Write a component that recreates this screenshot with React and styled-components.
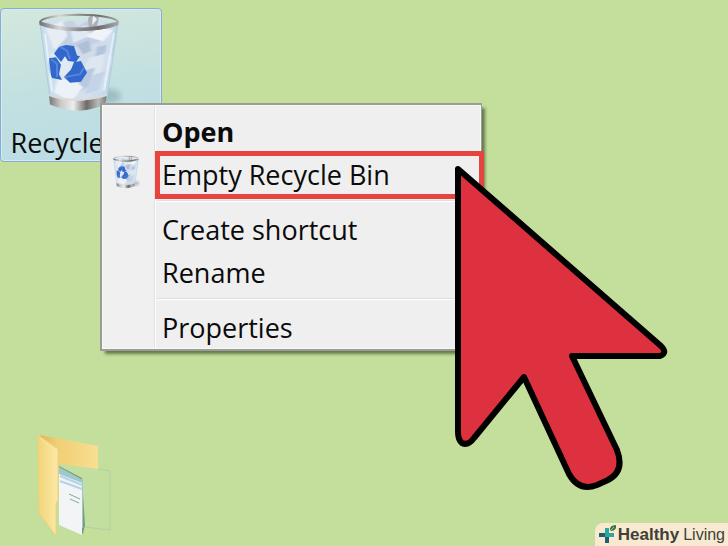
import React from "react";
import styled, { createGlobalStyle, css } from "styled-components";

const GlobalStyle = createGlobalStyle`
  * {
    box-sizing: border-box;
  }
  body {
    margin: 0;
    font-family: "Open Sans", "Noto Sans", sans-serif;
    color: #0b0b0b;
  }
`;

const Desktop = styled.main`
  position: relative;
  min-height: 100vh;
  overflow: hidden;
  background: #c4df9b;
`;

const BinShortcut = styled.button`
  position: absolute;
  top: 8px;
  left: 0;
  display: flex;
  flex-direction: column;
  align-items: center;
  gap: 12px;
  width: 162px;
  padding: 2px 0 0;
  border: 1px solid #86aed0;
  border-radius: 4px;
  background: linear-gradient(170deg, #d3e8de 0%, #c3e0e0 50%, #b9dce8 100%);
  box-shadow: inset 0 0 0 1px #d5ebf0;
  color: inherit;
  font: inherit;
  svg {
    display: block;
    margin-right: 4px;
  }
`;

const ShortcutLabel = styled.span`
  height: 36px;
  font-size: 27px;
  line-height: 36px;
  white-space: nowrap;
`;

const FolderShortcut = styled.button`
  position: absolute;
  top: 430px;
  left: 32px;
  padding: 0;
  border: 0;
  background: none;
  svg {
    display: block;
  }
`;

const Menu = styled.ul`
  position: absolute;
  top: 103px;
  left: 100px;
  width: 382px;
  margin: 0;
  padding: 5px 0 0;
  list-style: none;
  border: 2px solid #9a9c98;
  border-right-width: 1px;
  background: linear-gradient(to right, #f0f0f0 52px, #e0e0e0 52px, #e0e0e0 53px, #fdfdfd 53px, #fdfdfd 54px, #efefef 54px);
  box-shadow: inset 0 0 0 1px #f8f8f8, 4px 4px 3px -1px rgba(50, 65, 30, 0.65);
`;

const MenuItem = styled.li`
  position: relative;
  ${(props) =>
    props.$marked &&
    css`
      &::after {
        content: "";
        position: absolute;
        inset: -2px -3px -3px 53px;
        border: 5px solid #e5443f;
        pointer-events: none;
      }
    `}
`;

const MenuButton = styled.button`
  display: grid;
  grid-template-columns: 48px 1fr;
  gap: 12px;
  align-items: center;
  width: 100%;
  height: 43px;
  padding: 0;
  border: 0;
  background: none;
  color: inherit;
  font-family: inherit;
  font-size: 27px;
  font-weight: ${(props) => (props.$bold ? 700 : 400)};
  line-height: 36px;
  text-align: left;
`;

const IconSlot = styled.span`
  display: flex;
  justify-content: center;
  padding-bottom: 6px;
`;

const Separator = styled.li`
  height: 2px;
  margin: 4px 0 6px 55px;
  border-top: 1px solid #dcdcdc;
  border-bottom: 1px solid #fff;
`;

const Pointer = styled.svg`
  position: absolute;
  top: 160px;
  left: 448px;
  pointer-events: none;
`;

const Watermark = styled.div`
  position: absolute;
  right: 0;
  bottom: 0;
  display: flex;
  align-items: center;
  gap: 4px;
  height: 23px;
  padding: 0 3px 0 2px;
  border-top-left-radius: 8px;
  background: #f7ead0;
  color: #3f403a;
  font-family: "Liberation Sans", Arial, sans-serif;
  font-size: 16px;
  line-height: 20px;
  svg {
    margin-right: -4px;
  }
  strong {
    font-size: 17px;
  }
`;

const BinIcon = ({ width, height, id }) => (
  <svg width={width} height={height} viewBox="0 0 88 108" preserveAspectRatio="none" aria-hidden="true">
    <defs>
      <linearGradient id={`${id}-metal`}>
        <stop offset="0" stopColor="#777" />
        <stop offset=".2" stopColor="#c9c9c9" />
        <stop offset=".42" stopColor="#eee" />
        <stop offset=".65" stopColor="#6e6a68" />
        <stop offset=".85" stopColor="#bbb" />
        <stop offset="1" stopColor="#777" />
      </linearGradient>
      <linearGradient id={`${id}-rim`}>
        <stop offset="0" stopColor="#6f7377" />
        <stop offset=".25" stopColor="#d8d8d8" />
        <stop offset=".5" stopColor="#8c8c8c" />
        <stop offset=".75" stopColor="#6b6b6b" />
        <stop offset="1" stopColor="#a5a9ab" />
      </linearGradient>
      <linearGradient id={`${id}-glass`}>
        <stop offset="0" stopColor="#c3dcec" />
        <stop offset=".5" stopColor="#d7e4f2" />
        <stop offset="1" stopColor="#b9d4e6" />
      </linearGradient>
      <filter id={`${id}-soft`}>
        <feGaussianBlur stdDeviation="3" />
      </filter>
      <filter id={`${id}-paper`}>
        <feGaussianBlur stdDeviation=".8" />
      </filter>
    </defs>
    <ellipse cx="72" cy="90" rx="14" ry="8" fill="#81a5a8" opacity=".55" filter={`url(#${id}-soft)`} />
    <path d="M5 13 15 92Q41 106 72 92L83 13Z" fill={`url(#${id}-glass)`} stroke="#adc9db" />
    {/* crumpled paper */}
    <g filter={`url(#${id}-paper)`}>
      <path d="M9 18 22 7 38 14 54 6 79 17 74 43 77 51 69 84 53 89 36 96 18 84 21 62 14 51Z" fill="#d3dfee" />
      <path d="m11 18 17-8 8 15-17 16z" fill="#e6edf5" />
      <path d="m28 12 10-2 8 12-12 10z" fill="#c4d2e4" />
      <path d="m38 19 15-9 15 8-13 7 18 8-19 7-17 5-12-9z" fill="#c2d0e4" />
      <path d="m36 22 14-7 6 11-18 8z" fill="#dfe8f3" />
      <path d="m35 37 16 2 21-11-3 18-15 4 14 6-19 10z" fill="#d1dcea" />
      <path d="m51 27 12-9 15 2-10 12z" fill="#f0f4f9" />
      <path d="m42 36 12-5 2 11-8 4z" fill="#aebfd6" />
      <path d="m62 38 10-2-3 14-9 0z" fill="#b3c4db" />
      <path d="m54 50 16-5-3 19 5 8-15 2-10-10z" fill="#dde6f1" />
      <path d="m46 64 14-4-7 20-11 8z" fill="#b7c8df" />
      <path d="m58 68 13-5-7 21-15 4z" fill="#c4d4e8" />
      <path d="m23 71 20 5 5 5-12 15-17-10z" fill="#edf2f8" />
      <path d="m15 44 12 0 16 6 1 14-14 8-12-8z" fill="#dfeaf5" />
    </g>
    <path d="m53 8 4-5 7 4-2 9-8 3z" fill="#aab0b8" />
    <path d="m58 4 4 5-5 6z" fill="#edf0f5" />
    <g fill="#3268cc">
      <path d="m19 45 5-7 7-2 8 1 3 10 3 1-4 6-8-1-3-5-4 6z" />
      <path d="m14 50 7-1 5 8-2 10 3 6-10-2q-5-10-3-20z" />
      <path d="m39 54 7-1 6 12-6 10-11 1-6-6 7-8z" />
    </g>
    <path d="m25 38 7 4 3 9M16 51l6 5v14M30 70l15-3 4-7" fill="none" stroke="#5583df" strokeWidth="2" />
    <path d="M14 89Q40 101 72 89L70 99Q43 112 15 99Z" fill={`url(#${id}-metal)`} />
    <path d="M14 89Q40 99 72 89" fill="none" stroke="#dcd9d7" strokeWidth="2" />
    <ellipse cx="44" cy="12" rx="39" ry="8" fill="none" stroke={`url(#${id}-rim)`} strokeWidth="2" />
    <path d="M5 13Q43 26 83 13" fill="none" stroke={`url(#${id}-rim)`} strokeWidth="4" />
    <path d="m10 24 7 61M79 23 69 84" stroke="#f4fbfd" strokeWidth="2" opacity=".65" />
  </svg>
);

const FolderIcon = () => (
  <svg width="94" height="112" viewBox="0 0 94 112" aria-hidden="true">
    <defs>
      <linearGradient id="folder-front">
        <stop offset="0" stopColor="#f2d479" />
        <stop offset="1" stopColor="#fbe9a7" />
      </linearGradient>
      <linearGradient id="folder-back">
        <stop offset="0" stopColor="#ddb85a" />
        <stop offset=".3" stopColor="#f0cf75" />
        <stop offset="1" stopColor="#f8df91" />
      </linearGradient>
    </defs>
    <path d="M8 5 66 16V39L27 42Z" fill="url(#folder-back)" />
    <path d="M27 34 66 39 78 41V100L52 97Z" fill="#c2df9f" />
    <path d="M66 39 78 41V100L52 97" fill="none" stroke="#b3cfa0" />
    <path d="m27 36 23 12 3 47-2 9-24-10z" fill="#7f9981" />
    <path d="m27 37 24 13v48l-24-3z" fill="#9fc8ca" />
    <path d="m27 44 23 9v52l-23-10z" fill="#f2f4f6" />
    <path d="m28 46 22 9M28 51l22 8" stroke="#b3d3e9" strokeWidth="2" />
    <path d="m37 64 11 5M38 69l9 4" stroke="#8aa5a0" />
    <path d="M6 5 26 19V71L24 73V106L7 83Z" fill="url(#folder-front)" stroke="#ecd07c" />
    <path d="m8 8 16 13v50l-2 2v29" fill="none" stroke="#fbe6a0" />
  </svg>
);

const LogoIcon = () => (
  <svg width="21" height="22" viewBox="0 0 21 22" aria-hidden="true">
    <path d="M8 4h4v5h5v4h-5v6H8v-6H2V9h6z" fill="#2ba5a6" />
    <path d="M2 9h6v4H2zM8 13h4v6H8z" fill="#21606b" />
    <path d="M13 7q-1-6 6-6 1 6-6 6z" fill="#38783d" />
    <path d="m13 7 4-4" stroke="#a7c38a" />
  </svg>
);

const items = [
  { label: "Open", bold: true },
  { label: "Empty Recycle Bin", icon: true, marked: true, divider: true },
  { label: "Create shortcut" },
  { label: "Rename", divider: true },
  { label: "Properties" },
];

const ContextMenu = () => (
  <Menu>
    {items.map((item) => (
      <React.Fragment key={item.label}>
        <MenuItem $marked={item.marked}>
          <MenuButton type="button" $bold={item.bold}>
            <IconSlot>{item.icon && <BinIcon id="menu-bin" width={28} height={34} />}</IconSlot>
            <span>{item.label}</span>
          </MenuButton>
        </MenuItem>
        {item.divider && <Separator role="separator" />}
      </React.Fragment>
    ))}
  </Menu>
);

export default function App() {
  return (
    <>
      <GlobalStyle />
      <Desktop>
        <BinShortcut type="button">
          <BinIcon id="bin" width={88} height={102} />
          <ShortcutLabel>Recycle Bin</ShortcutLabel>
        </BinShortcut>
        <FolderShortcut type="button" aria-label="Folder">
          <FolderIcon />
        </FolderShortcut>
        <ContextMenu />
        <Pointer width="224" height="336" viewBox="0 0 224 336" aria-hidden="true">
          <path
            d="M10 9 213 186Q220 193 212 196H124L169 290Q177 311 160 320L149 325Q131 332 121 314L76 217 26 278Q20 286 14 283Q10 280 10 272Z"
            fill="#de3140"
            stroke="#000"
            strokeWidth="6"
            strokeLinejoin="round"
          />
        </Pointer>
        <Watermark>
          <LogoIcon />
          <strong>Healthy</strong>
          <span>Living</span>
        </Watermark>
      </Desktop>
    </>
  );
}
